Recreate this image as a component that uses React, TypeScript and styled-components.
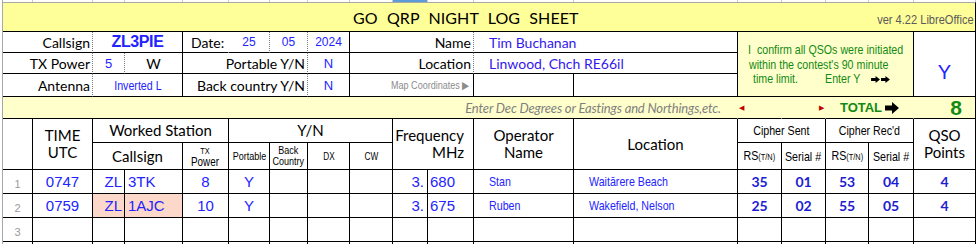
import React from "react";
import styled, { createGlobalStyle, css } from "styled-components";

const GlobalStyle = createGlobalStyle`
  html, body { margin: 0; padding: 0; background: #ffffff; }
  body { width: 978px; height: 244px; overflow: hidden; }
  *, *::before, *::after { box-sizing: border-box; }
`;

const COLS =
  "30px 60px 32px 58px 46px 41px 38px 42px 43px 35px 46px 100px 164px 44px 44px 43px 45px 62px";

const CALIBRI = `Lato, "Noto Sans", sans-serif`;
const ARIAL = `"Liberation Sans", Arial, sans-serif`;

const BLUE = "#2323ff";
const INK_BLUE = "#1c1cd2";
const GREEN = "#138a13";
const YELLOW = "#ffff99";
const PALE = "#ffffcc";
const PINK = "#fcd8cb";

/* Arial Narrow look: Liberation Sans squeezed horizontally */
const condensed = (origin: string) => css`
  display: inline-block;
  font-family: ${ARIAL};
  transform: scaleX(0.82);
  transform-origin: ${origin};
  white-space: nowrap;
`;

type Line = "solid" | "dotted" | "none";

const line = (l: Line = "solid") =>
  l === "dotted"
    ? "1px dotted #7c7c7c"
    : l === "none"
    ? "1px solid transparent"
    : "1px solid #000";

const Page = styled.div`
  width: 978px;
  height: 244px;
  overflow: hidden;
  background: #fff;
`;

const Sheet = styled.div`
  margin-left: 2px;
  width: 974px;
  border-left: 1px solid #a8a8a8;
`;

const SheetGrid = styled.div<{ $rows: string }>`
  display: grid;
  grid-template-columns: ${COLS};
  grid-template-rows: ${(p) => p.$rows};
`;

const Cell = styled.div<{
  $col: string;
  $row: string;
  $right?: Line;
  $bottom?: Line;
  $bg?: string;
  $justify?: string;
  $align?: string;
  $pad?: string;
}>`
  grid-column: ${(p) => p.$col};
  grid-row: ${(p) => p.$row};
  display: flex;
  align-items: ${(p) => p.$align ?? "center"};
  justify-content: ${(p) => p.$justify ?? "center"};
  padding: ${(p) => p.$pad ?? "0"};
  background: ${(p) => p.$bg ?? "transparent"};
  border-right: ${(p) => line(p.$right)};
  border-bottom: ${(p) => line(p.$bottom)};
  min-width: 0;
  overflow: hidden;
  white-space: nowrap;
`;

/* ---------- top stub strip (row above) ---------- */
const StubCell = styled.div<{ $active?: boolean }>`
  border-right: 1px solid #c9c9c9;
  background: ${(p) => (p.$active ? "#5a9bd8" : "transparent")};
`;

/* ---------- title band ---------- */
const TitleBand = styled.div`
  display: flex;
  align-items: center;
  height: 30px;
  background: ${YELLOW};
  border-top: 1px solid #a8a8a8;
  border-bottom: 1px solid #000;
  border-right: 1px solid #000;
`;

const Title = styled.h1`
  margin: 0 0 0 350px;
  font: 400 16px ${CALIBRI};
  color: #000;
  word-spacing: 5px;
  letter-spacing: 0.1px;
`;

const Version = styled.span`
  margin-left: auto;
  margin-right: 1px;
  margin-top: 4px;
  font-size: 13.5px;
  color: #5a5a5a;
  ${condensed("right center")}
`;

/* ---------- form texts ---------- */
const Label = styled.span`
  font: 400 14px ${CALIBRI};
  color: #000;
`;

const CallValue = styled.span`
  font: 700 16px ${ARIAL};
  color: ${BLUE};
  letter-spacing: -0.4px;
`;

const SmallValue = styled.span`
  font: 400 12px ${ARIAL};
  color: ${BLUE};
`;

const MidValue = styled.span`
  font: 400 13px ${ARIAL};
  color: ${BLUE};
`;

const NarrowValue = styled.span`
  font-size: 13px;
  color: ${BLUE};
  ${condensed("center")}
`;

const PersonValue = styled.span`
  font: 400 14px ${CALIBRI};
  color: #3318ee;
`;

const MapHint = styled.span`
  font-size: 11px;
  color: #8c8c8c;
  ${condensed("right center")}
`;

const ConfirmBox = styled.div`
  display: flex;
  flex-direction: column;
  justify-content: center;
  padding-top: 2px;
`;

const ConfirmLine = styled.div<{ $indent: number }>`
  display: flex;
  align-items: center;
  margin-left: ${(p) => p.$indent}px;
  font-size: 13px;
  line-height: 14.5px;
  color: ${GREEN};
  ${condensed("left center")}
`;

const Gap = styled.span<{ $w: number }>`
  display: inline-block;
  width: ${(p) => p.$w}px;
`;

const AnswerY = styled.span`
  font: 400 20px ${ARIAL};
  color: ${BLUE};
`;

const HintText = styled.span`
  font: italic 400 13px ${CALIBRI};
  letter-spacing: -0.15px;
  color: #7f7f7f;
`;

const Tri = styled.span`
  font: 400 7px ${ARIAL};
  color: #c00000;
`;

const TotalText = styled.span`
  font: 700 13px ${ARIAL};
  color: ${GREEN};
  display: flex;
  align-items: center;
  gap: 3px;
`;

const TotalValue = styled.span`
  font: 700 21px ${ARIAL};
  color: ${GREEN};
`;

/* ---------- log table texts ---------- */
const HeadBig = styled.div<{ $align?: string }>`
  font: 400 15px ${CALIBRI};
  line-height: 17px;
  color: #000;
  text-align: ${(p) => p.$align ?? "center"};
`;

const HeadSmall = styled.div<{ $size?: number }>`
  font-size: ${(p) => p.$size ?? 11}px;
  line-height: 11px;
  color: #000;
  text-align: center;
  ${condensed("center")}
`;

const Tiny = styled.span`
  font-size: 9px;
`;

const RowNum = styled.span`
  font: 400 11px ${ARIAL};
  color: #9a9a9a;
`;

const DataText = styled.span`
  font: 400 15px ${ARIAL};
  color: ${BLUE};
`;

const DataNarrow = styled.span`
  font-size: 13px;
  color: ${BLUE};
  ${condensed("left center")}
`;

const CipherText = styled.span`
  font: 700 14px ${CALIBRI};
  color: ${INK_BLUE};
`;

/* ---------- icons ---------- */
const Arrow = ({ w, h }: { w: number; h: number }) => (
  <svg width={w} height={h} viewBox="0 0 14 12" preserveAspectRatio="none">
    <polygon points="0,3.5 7,3.5 7,0 14,6 7,12 7,8.5 0,8.5" fill="#000" />
  </svg>
);

const STUBS = Array.from({ length: 18 }, (_, i) => i);

type Entry = {
  n: string;
  time?: string;
  pre?: string;
  suf?: string;
  pwr?: string;
  port?: string;
  mhz?: string;
  khz?: string;
  op?: string;
  loc?: string;
  rs1?: string;
  s1?: string;
  rs2?: string;
  s2?: string;
  pts?: string;
  hi?: boolean;
};

const ENTRIES: Entry[] = [
  {
    n: "1",
    time: "0747",
    pre: "ZL",
    suf: "3TK",
    pwr: "8",
    port: "Y",
    mhz: "3.",
    khz: "680",
    op: "Stan",
    loc: "Waitārere Beach",
    rs1: "35",
    s1: "01",
    rs2: "53",
    s2: "04",
    pts: "4",
  },
  {
    n: "2",
    time: "0759",
    pre: "ZL",
    suf: "1AJC",
    pwr: "10",
    port: "Y",
    mhz: "3.",
    khz: "675",
    op: "Ruben",
    loc: "Wakefield, Nelson",
    rs1: "25",
    s1: "02",
    rs2: "55",
    s2: "05",
    pts: "4",
    hi: true,
  },
  { n: "3" },
];

export default function App() {
  return (
    <Page>
      <GlobalStyle />
      <Sheet>
        <SheetGrid $rows="2px">
          {STUBS.map((i) => (
            <StubCell key={i} $active={i === 9} />
          ))}
        </SheetGrid>

        <TitleBand>
          <Title>GO QRP NIGHT LOG SHEET</Title>
          <Version>ver 4.22 LibreOffice</Version>
        </TitleBand>

        <SheetGrid $rows="21px 21px 23px 22px">
          {/* row 1 */}
          <Cell $col="1 / 3" $row="1" $right="dotted" $justify="flex-end" $pad="0 2px 0 0">
            <Label>Callsign</Label>
          </Cell>
          <Cell $col="3 / 5" $row="1">
            <CallValue>ZL3PIE</CallValue>
          </Cell>
          <Cell $col="5 / 6" $row="1" $right="none" $justify="flex-start" $pad="0 0 0 8px">
            <Label>Date:</Label>
          </Cell>
          <Cell $col="6 / 7" $row="1" $right="dotted">
            <SmallValue>25</SmallValue>
          </Cell>
          <Cell $col="7 / 8" $row="1" $right="dotted">
            <SmallValue>05</SmallValue>
          </Cell>
          <Cell $col="8 / 9" $row="1">
            <SmallValue>2024</SmallValue>
          </Cell>
          <Cell $col="9 / 12" $row="1" $right="dotted" $justify="flex-end" $pad="0 2px 0 0">
            <Label>Name</Label>
          </Cell>
          <Cell $col="12 / 14" $row="1" $justify="flex-start" $pad="0 0 0 15px">
            <PersonValue>Tim Buchanan</PersonValue>
          </Cell>
          <Cell $col="14 / 18" $row="1 / 4" $bg={PALE} $justify="flex-start">
            <ConfirmBox>
              <ConfirmLine $indent={10}>I&nbsp;&nbsp;confirm all QSOs were initiated</ConfirmLine>
              <ConfirmLine $indent={11}>within the contest's 90 minute</ConfirmLine>
              <ConfirmLine $indent={15}>
                time limit.
                <Gap $w={33} />
                Enter Y
                <Gap $w={13} />
                <Arrow w={11} h={7} />
                <Gap $w={1} />
                <Arrow w={11} h={7} />
              </ConfirmLine>
            </ConfirmBox>
          </Cell>
          <Cell $col="18 / 19" $row="1 / 4" $align="flex-end" $pad="0 0 12px 0">
            <AnswerY>Y</AnswerY>
          </Cell>

          {/* row 2 */}
          <Cell $col="1 / 3" $row="2" $right="dotted" $justify="flex-end" $pad="0 2px 0 0">
            <Label>TX Power</Label>
          </Cell>
          <Cell $col="3 / 4" $row="2" $right="dotted">
            <MidValue>5</MidValue>
          </Cell>
          <Cell $col="4 / 5" $row="2">
            <Label>W</Label>
          </Cell>
          <Cell $col="5 / 8" $row="2" $right="dotted" $justify="flex-end" $pad="0 2px 0 0">
            <Label>Portable Y/N</Label>
          </Cell>
          <Cell $col="8 / 9" $row="2">
            <MidValue>N</MidValue>
          </Cell>
          <Cell $col="9 / 12" $row="2" $right="dotted" $justify="flex-end" $pad="0 2px 0 0">
            <Label>Location</Label>
          </Cell>
          <Cell $col="12 / 14" $row="2" $justify="flex-start" $pad="0 0 0 15px">
            <PersonValue>Linwood, Chch RE66il</PersonValue>
          </Cell>

          {/* row 3 */}
          <Cell $col="1 / 3" $row="3" $right="dotted" $justify="flex-end" $pad="0 2px 0 0">
            <Label>Antenna</Label>
          </Cell>
          <Cell $col="3 / 5" $row="3">
            <NarrowValue>Inverted L</NarrowValue>
          </Cell>
          <Cell $col="5 / 8" $row="3" $right="dotted" $justify="flex-end" $pad="0 2px 0 0">
            <Label>Back country Y/N</Label>
          </Cell>
          <Cell $col="8 / 9" $row="3">
            <MidValue>N</MidValue>
          </Cell>
          <Cell $col="9 / 12" $row="3" $justify="flex-end" $pad="0 4px 0 0">
            <MapHint>Map Coordinates ▶</MapHint>
          </Cell>
          <Cell $col="12 / 13" $row="3" />
          <Cell $col="13 / 14" $row="3" />

          {/* row 4 */}
          <Cell $col="1 / 14" $row="4" $right="none" $bg={PALE} $justify="flex-end" $pad="0 16px 0 0">
            <HintText>Enter Dec Degrees or Eastings and Northings,etc.</HintText>
          </Cell>
          <Cell $col="14 / 15" $row="4" $right="none" $bg={PALE} $justify="flex-start" $pad="0 0 0 1px">
            <Tri>◀</Tri>
          </Cell>
          <Cell $col="15 / 16" $row="4" $right="none" $bg={PALE} $justify="flex-end" $pad="0 1px 0 0">
            <Tri>▶</Tri>
          </Cell>
          <Cell $col="16 / 18" $row="4" $right="none" $bg={PALE}>
            <TotalText>
              TOTAL
              <Arrow w={14} h={12} />
            </TotalText>
          </Cell>
          <Cell $col="18 / 19" $row="4" $bg={PALE} $justify="flex-end" $pad="0 13px 0 0">
            <TotalValue>8</TotalValue>
          </Cell>
        </SheetGrid>

        <SheetGrid $rows="24px 27px 24px 24px 24px 24px">
          <Cell $col="1 / 2" $row="1 / 3" />
          <Cell $col="2 / 3" $row="1 / 3">
            <HeadBig>
              TIME
              <br />
              UTC
            </HeadBig>
          </Cell>
          <Cell $col="3 / 6" $row="1">
            <HeadBig>Worked Station</HeadBig>
          </Cell>
          <Cell $col="3 / 5" $row="2">
            <HeadBig>Callsign</HeadBig>
          </Cell>
          <Cell $col="5 / 6" $row="2">
            <HeadSmall $size={12}>
              <Tiny>TX</Tiny>
              <br />
              Power
            </HeadSmall>
          </Cell>
          <Cell $col="6 / 10" $row="1">
            <HeadBig>Y/N</HeadBig>
          </Cell>
          <Cell $col="6 / 7" $row="2">
            <HeadSmall $size={11}>Portable</HeadSmall>
          </Cell>
          <Cell $col="7 / 8" $row="2">
            <HeadSmall $size={11}>
              Back
              <br />
              Country
            </HeadSmall>
          </Cell>
          <Cell $col="8 / 9" $row="2">
            <HeadSmall $size={10}>DX</HeadSmall>
          </Cell>
          <Cell $col="9 / 10" $row="2">
            <HeadSmall $size={10}>CW</HeadSmall>
          </Cell>
          <Cell $col="10 / 12" $row="1 / 3" $justify="flex-end" $pad="0 9px 0 0">
            <HeadBig $align="right">
              Frequency
              <br />
              MHz
            </HeadBig>
          </Cell>
          <Cell $col="12 / 13" $row="1 / 3">
            <HeadBig>
              Operator
              <br />
              Name
            </HeadBig>
          </Cell>
          <Cell $col="13 / 14" $row="1 / 3">
            <HeadBig>Location</HeadBig>
          </Cell>
          <Cell $col="14 / 16" $row="1">
            <HeadSmall $size={13}>Cipher Sent</HeadSmall>
          </Cell>
          <Cell $col="16 / 18" $row="1">
            <HeadSmall $size={13}>Cipher Rec'd</HeadSmall>
          </Cell>
          <Cell $col="14 / 15" $row="2">
            <HeadSmall $size={13}>
              RS<Tiny>(T/N)</Tiny>
            </HeadSmall>
          </Cell>
          <Cell $col="15 / 16" $row="2">
            <HeadSmall $size={13}>Serial #</HeadSmall>
          </Cell>
          <Cell $col="16 / 17" $row="2">
            <HeadSmall $size={13}>
              RS<Tiny>(T/N)</Tiny>
            </HeadSmall>
          </Cell>
          <Cell $col="17 / 18" $row="2">
            <HeadSmall $size={13}>Serial #</HeadSmall>
          </Cell>
          <Cell $col="18 / 19" $row="1 / 3">
            <HeadBig>
              QSO
              <br />
              Points
            </HeadBig>
          </Cell>

          {ENTRIES.map((e, i) => {
            const r = String(i + 3);
            const hiBg = e.hi ? PINK : undefined;
            return (
              <React.Fragment key={e.n}>
                <Cell $col="1 / 2" $row={r} $align="flex-end" $pad="0 0 3px 0">
                  <RowNum>{e.n}</RowNum>
                </Cell>
                <Cell $col="2 / 3" $row={r}>
                  <DataText>{e.time}</DataText>
                </Cell>
                <Cell $col="3 / 4" $row={r} $bg={hiBg} $justify="flex-end" $pad="0 2px 0 0">
                  <DataText>{e.pre}</DataText>
                </Cell>
                <Cell $col="4 / 5" $row={r} $bg={hiBg} $justify="flex-start" $pad="0 0 0 3px">
                  <DataText>{e.suf}</DataText>
                </Cell>
                <Cell $col="5 / 6" $row={r}>
                  <DataText>{e.pwr}</DataText>
                </Cell>
                <Cell $col="6 / 7" $row={r}>
                  <DataText>{e.port}</DataText>
                </Cell>
                <Cell $col="7 / 8" $row={r} />
                <Cell $col="8 / 9" $row={r} />
                <Cell $col="9 / 10" $row={r} />
                <Cell $col="10 / 11" $row={r} $justify="flex-end" $pad="0 3px 0 0">
                  <DataText>{e.mhz}</DataText>
                </Cell>
                <Cell $col="11 / 12" $row={r} $justify="flex-start" $pad="0 0 0 2px">
                  <DataText>{e.khz}</DataText>
                </Cell>
                <Cell $col="12 / 13" $row={r} $justify="flex-start" $pad="0 0 0 15px">
                  <DataNarrow>{e.op}</DataNarrow>
                </Cell>
                <Cell $col="13 / 14" $row={r} $justify="flex-start" $pad="0 0 0 15px">
                  <DataNarrow>{e.loc}</DataNarrow>
                </Cell>
                <Cell $col="14 / 15" $row={r}>
                  <CipherText>{e.rs1}</CipherText>
                </Cell>
                <Cell $col="15 / 16" $row={r}>
                  <CipherText>{e.s1}</CipherText>
                </Cell>
                <Cell $col="16 / 17" $row={r}>
                  <CipherText>{e.rs2}</CipherText>
                </Cell>
                <Cell $col="17 / 18" $row={r}>
                  <CipherText>{e.s2}</CipherText>
                </Cell>
                <Cell $col="18 / 19" $row={r}>
                  <CipherText>{e.pts}</CipherText>
                </Cell>
              </React.Fragment>
            );
          })}
          {STUBS.map((i) => (
            <Cell key={`s${i}`} $col={`${i + 1} / ${i + 2}`} $row="6" />
          ))}
        </SheetGrid>
      </Sheet>
    </Page>
  );
}
